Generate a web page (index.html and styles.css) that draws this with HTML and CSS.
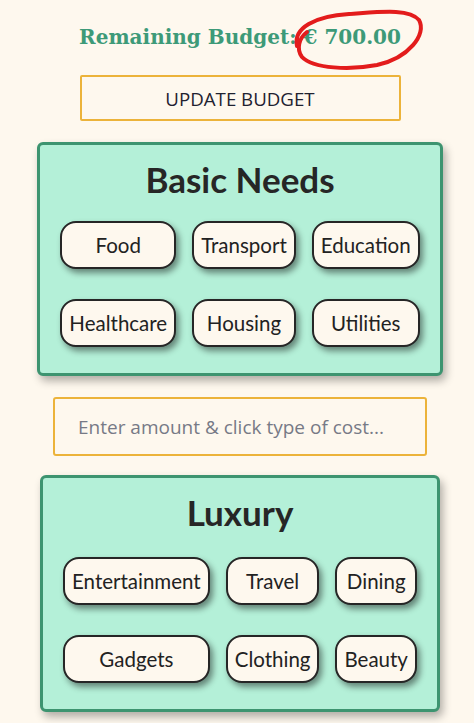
FILE: index.html
```html
<!DOCTYPE html>
<html lang="en">
<head>
  <meta charset="UTF-8">
  <meta name="viewport" content="width=device-width, initial-scale=1.0">
  <title>Budget Tracker</title>
  <link rel="stylesheet" href="styles.css">
</head>
<body>
  <div class="container">
    <div class="budget-head">
      <h2 class="remaining">Remaining Budget: <span id="amount">€ 700.00</span></h2>
      <svg class="scribble" width="140" height="70" viewBox="0 0 140 70">
        <path d="M6 42 C2 24 24 12 58 10 C88 8 118 4 128 16 C136 30 118 54 86 61 C60 66 22 65 11 53 C5 45 8 34 16 28" fill="none" stroke="#e31c1c" stroke-width="4" stroke-linecap="round"/>
      </svg>
    </div>
    <button class="update-btn">UPDATE BUDGET</button>

    <div class="card">
      <h1>Basic Needs</h1>
      <div class="types">
        <button class="type">Food</button>
        <button class="type">Transport</button>
        <button class="type">Education</button>
        <button class="type">Healthcare</button>
        <button class="type">Housing</button>
        <button class="type">Utilities</button>
      </div>
    </div>

    <input class="amount-input" type="text" placeholder="Enter amount &amp; click type of cost...">

    <div class="card luxury">
      <h1>Luxury</h1>
      <div class="types">
        <button class="type">Entertainment</button>
        <button class="type">Travel</button>
        <button class="type">Dining</button>
        <button class="type">Gadgets</button>
        <button class="type">Clothing</button>
        <button class="type">Beauty</button>
      </div>
    </div>
  </div>
</body>
</html>
```

FILE: styles.css
```css
body {
  margin: 0;
  background-color: #fef8ee;
  font-family: Lato, "Open Sans", sans-serif;
}

.container {
  display: flex;
  flex-direction: column;
  align-items: center;
  padding: 22px 0 20px 6px;
}

.budget-head {
  position: relative;
}

.remaining {
  margin: 0;
  font-family: "DejaVu Serif", serif;
  font-size: 20px;
  font-weight: bold;
  color: #3d9a78;
  line-height: 30px;
}

.scribble {
  position: absolute;
  right: -30px;
  top: -18px;
}

.update-btn {
  margin-top: 23px;
  width: 321px;
  height: 46px;
  background-color: #fef8ee;
  border: 2px solid #ecb33a;
  border-radius: 2px;
  font-family: "Open Sans", sans-serif;
  font-size: 18.7px;
  color: #1f2230;
}

.card {
  margin-top: 21px;
  padding: 12px 20px 26px;
  background-color: #b4f0d8;
  border: 3px solid #3d9470;
  border-radius: 6px;
  box-shadow: 3px 5px 8px rgba(0, 0, 0, 0.3);
}

.card h1 {
  margin: 0 0 20px;
  text-align: center;
  font-size: 35px;
  font-weight: bold;
  color: #262626;
  line-height: 44px;
}

.card.luxury {
  margin-top: 19px;
}

.card.luxury h1 {
  margin-bottom: 23px;
}

.types {
  display: grid;
  grid-template-columns: repeat(3, auto);
  justify-content: center;
  column-gap: 16px;
  row-gap: 30px;
}

.type {
  height: 48px;
  padding: 0 7px;
  background-color: #fef8ee;
  border: 2px solid #262626;
  border-radius: 16px;
  box-shadow: 3px 4px 6px rgba(0, 0, 0, 0.45);
  font-family: Lato, sans-serif;
  font-size: 20.5px;
  color: #222;
}

.amount-input {
  margin-top: 21px;
  width: 374px;
  height: 59px;
  box-sizing: border-box;
  padding: 0 23px;
  background-color: #fef8ee;
  border: 2px solid #ecb33a;
  border-radius: 3px;
  font-family: "Open Sans", sans-serif;
  font-size: 19px;
}

.amount-input::placeholder {
  color: #777a86;
}
```
